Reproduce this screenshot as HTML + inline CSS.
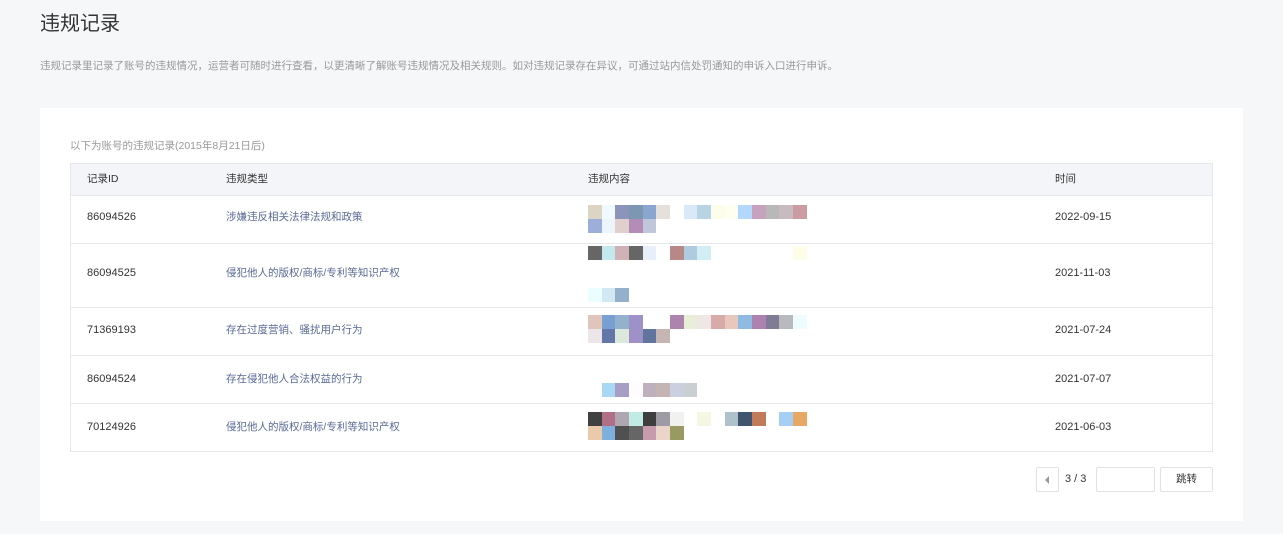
<!DOCTYPE html><html><head><meta charset="utf-8"><style>
body{margin:0;width:1283px;height:534px;background:#f6f7f9;font-family:"Liberation Sans","Noto Sans CJK SC",sans-serif;position:relative;overflow:hidden}
.a{position:absolute}
h1{position:absolute;left:40px;top:10px;margin:0;font-size:20px;line-height:28px;font-weight:normal;color:#333}
.desc{left:40px;top:59px;font-size:10.5px;line-height:14px;color:#999;white-space:nowrap}
.card{left:40px;top:108px;width:1203px;height:413px;background:#fff}
.sub{left:70px;top:139px;font-size:10.5px;line-height:14px;color:#999}
.tbl{left:70px;top:163px;width:1141px;height:287px;border:1px solid #e6e7eb}
.hd{left:0;top:0;width:1141px;height:31px;background:#f4f5f8;border-bottom:1px solid #e6e7eb}
.row{left:0;width:1141px;border-bottom:1px solid #e6e7eb}
.t{position:absolute;font-size:10.5px;line-height:14px;color:#333;white-space:nowrap}
.n{font-size:11px}
.l{color:#5a6a96}
.px{position:absolute;left:588px;display:flex;height:14px}
.px i{display:block;width:13.67px;height:14px}
.btn{border:1px solid #e1e2e6;border-radius:2px;background:#fff;box-sizing:border-box}
</style></head><body>
<h1>违规记录</h1>
<div class="a desc">违规记录里记录了账号的违规情况，运营者可随时进行查看，以更清晰了解账号违规情况及相关规则。如对违规记录存在异议，可通过站内信处罚通知的申诉入口进行申诉。</div>
<div class="a card"></div>
<div class="a sub">以下为账号的违规记录(2015年8月21日后)</div>
<div class="a tbl">
<div class="a hd"></div>
<div class="a row" style="top:32px;height:47px"></div>
<div class="a row" style="top:79px;height:64px"></div>
<div class="a row" style="top:144px;height:47px"></div>
<div class="a row" style="top:192px;height:47px"></div>
</div>
<div class="t" style="left:87px;top:172px">记录ID</div><div class="t" style="left:226px;top:172px">违规类型</div><div class="t" style="left:588px;top:172px">违规内容</div><div class="t" style="left:1055px;top:172px">时间</div>
<div class="t n" style="left:87px;top:210px">86094526</div><div class="t l" style="left:226px;top:210px">涉嫌违反相关法律法规和政策</div><div class="t n" style="left:1055px;top:210px">2022-09-15</div>
<div class="t n" style="left:87px;top:266px">86094525</div><div class="t l" style="left:226px;top:266px">侵犯他人的版权/商标/专利等知识产权</div><div class="t n" style="left:1055px;top:266px">2021-11-03</div>
<div class="t n" style="left:87px;top:323px">71369193</div><div class="t l" style="left:226px;top:323px">存在过度营销、骚扰用户行为</div><div class="t n" style="left:1055px;top:323px">2021-07-24</div>
<div class="t n" style="left:87px;top:372px">86094524</div><div class="t l" style="left:226px;top:372px">存在侵犯他人合法权益的行为</div><div class="t n" style="left:1055px;top:372px">2021-07-07</div>
<div class="t n" style="left:87px;top:420px">70124926</div><div class="t l" style="left:226px;top:420px">侵犯他人的版权/商标/专利等知识产权</div><div class="t n" style="left:1055px;top:420px">2021-06-03</div>

<div class="px" style="top:205px"><i style="background:#ddd5c3"></i><i style="background:#f0f9ff"></i><i style="background:#8c94bb"></i><i style="background:#7b97b2"></i><i style="background:#8aa5cf"></i><i style="background:#e4e1dc"></i><i></i><i style="background:#d9e9f8"></i><i style="background:#b7d3e4"></i><i style="background:#fdfdec"></i><i style="background:#fefff0"></i><i style="background:#b2d8fe"></i><i style="background:#c6a2be"></i><i style="background:#b9b8b8"></i><i style="background:#c8bbc0"></i><i style="background:#cb9ba3"></i></div>
<div class="px" style="top:219px"><i style="background:#9daedb"></i><i style="background:#ecf4fd"></i><i style="background:#e0cfcd"></i><i style="background:#b38cb7"></i><i style="background:#c0c6dc"></i></div>
<div class="px" style="top:246px"><i style="background:#666"></i><i style="background:#c3e9ee"></i><i style="background:#d0b2b6"></i><i style="background:#666"></i><i style="background:#e7effb"></i><i></i><i style="background:#b88888"></i><i style="background:#afcbe0"></i><i style="background:#d2eef4"></i><i></i><i></i><i></i><i></i><i></i><i></i><i style="background:#fefee8"></i></div>
<div class="px" style="top:288px"><i style="background:#eafeff"></i><i style="background:#d2e8f2"></i><i style="background:#94b0cb"></i></div>
<div class="px" style="top:315px"><i style="background:#dfc5bb"></i><i style="background:#78a0d3"></i><i style="background:#93b1cd"></i><i style="background:#9e91ca"></i><i></i><i></i><i style="background:#ad84ae"></i><i style="background:#e9eed8"></i><i style="background:#eee7e5"></i><i style="background:#d9aaaa"></i><i style="background:#e8c7bd"></i><i style="background:#8fbbe2"></i><i style="background:#ad81b0"></i><i style="background:#807c96"></i><i style="background:#b9babd"></i><i style="background:#effcfd"></i></div>
<div class="px" style="top:329px"><i style="background:#ece5ea"></i><i style="background:#6475a8"></i><i style="background:#dce8db"></i><i style="background:#9f90c7"></i><i style="background:#60749e"></i><i style="background:#c5b5b3"></i></div>
<div class="px" style="top:383px"><i></i><i style="background:#a8d8f3"></i><i style="background:#a89dc4"></i><i style="background:#fffcfe"></i><i style="background:#bfb0be"></i><i style="background:#c4b4b4"></i><i style="background:#cad0df"></i><i style="background:#cacfd1"></i></div>
<div class="px" style="top:412px"><i style="background:#404040"></i><i style="background:#b06e87"></i><i style="background:#aea6b1"></i><i style="background:#c1ebe5"></i><i style="background:#3e3e3e"></i><i style="background:#9e9ba5"></i><i style="background:#f1f1ef"></i><i></i><i style="background:#f5f7e2"></i><i></i><i style="background:#afc1cb"></i><i style="background:#40566e"></i><i style="background:#c27b58"></i><i></i><i style="background:#a5cff5"></i><i style="background:#e7a865"></i></div>
<div class="px" style="top:426px"><i style="background:#e9cbab"></i><i style="background:#7fafdc"></i><i style="background:#505050"></i><i style="background:#666"></i><i style="background:#c79bab"></i><i style="background:#ead5c8"></i><i style="background:#999a62"></i></div>

<div class="a btn" style="left:1036px;top:467px;width:23px;height:25px"><div class="a" style="left:8px;top:8px;width:0;height:0;border-top:4px solid transparent;border-bottom:4px solid transparent;border-right:4px solid #999"></div></div>
<div class="t n" style="left:1065px;top:472px">3 / 3</div>
<div class="a btn" style="left:1096px;top:467px;width:59px;height:25px"></div>
<div class="a btn" style="left:1160px;top:467px;width:53px;height:25px"><div class="t" style="left:15px;top:4px">跳转</div></div>
</body></html>
